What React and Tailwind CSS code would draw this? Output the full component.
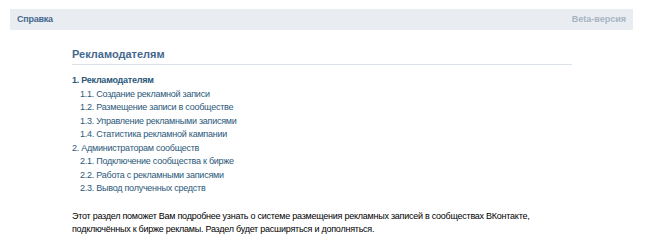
import React from 'react';

const items = [
  { label: '1. Рекламодателям', bold: true },
  { label: '1.1. Создание рекламной записи', sub: true },
  { label: '1.2. Размещение записи в сообществе', sub: true },
  { label: '1.3. Управление рекламными записями', sub: true },
  { label: '1.4. Статистика рекламной кампании', sub: true },
  { label: '2. Администраторам сообществ' },
  { label: '2.1. Подключение сообщества к бирже', sub: true },
  { label: '2.2. Работа с рекламными записями', sub: true },
  { label: '2.3. Вывод полученных средств', sub: true },
];

export default function App() {
  return (
    <div className="w-[645px] h-[248px] bg-white pt-[9px] font-['Liberation_Sans',sans-serif] text-[9px] tracking-[-0.25px]">
      <div className="ml-[10px] mr-[12px] h-[21px] bg-[#e9edf1] flex items-center justify-between px-[7px] font-bold">
        <span className="text-[#45688e]">Справка</span>
        <span className="text-[#a7b4c3] tracking-normal">Beta-версия</span>
      </div>

      <div className="ml-[72px] w-[500px]">
        <h1 className="mt-[17px] text-[11px] font-bold tracking-normal text-[#45688e] leading-[14px] pb-[3px] border-b border-[#dae1e8]">
          Рекламодателям
        </h1>

        <ul className="mt-[9px] text-[#2b587a] leading-[13.5px]">
          {items.map((it) => (
            <li key={it.label} className={(it.sub ? 'pl-[8px] ' : '') + (it.bold ? 'font-bold' : '')}>
              {it.label}
            </li>
          ))}
        </ul>

        <p className="mt-[14px] text-black leading-[13.5px] w-[520px]">
          Этот раздел поможет Вам подробнее узнать о системе размещения рекламных записей в сообществах ВКонтакте,
          <br />
          подключённых к бирже рекламы. Раздел будет расширяться и дополняться.
        </p>
      </div>
    </div>
  );
}
